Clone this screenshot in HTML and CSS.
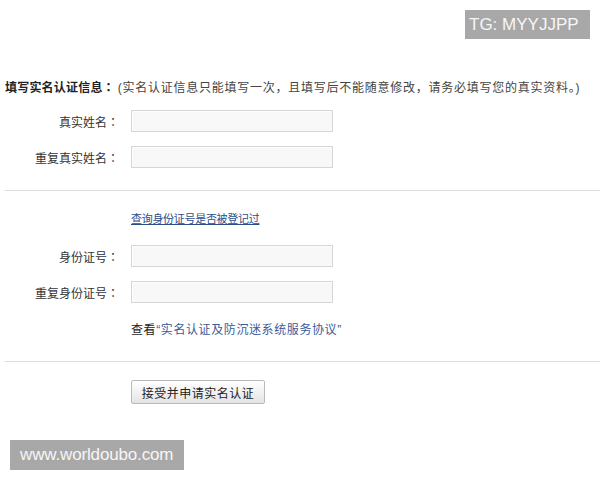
FILE: index.html
```html
<!DOCTYPE html>
<html lang="zh-CN">
<head>
<meta charset="utf-8">
<title>填写实名认证信息</title>
<link rel="stylesheet" href="styles.css">
</head>
<body>
<div class="main">
  <p class="intro"><b class="title">填写实名认证信息<span class="colon" lang="zh-TW">：</span></b><span class="note">(实名认证信息只能填写一次，且填写后不能随意修改，请务必填写您的真实资料。)</span></p>

  <div class="rows">
    <div class="row"><label class="lbl">真实姓名<span class="colon" lang="zh-TW">：</span></label><span class="input"></span></div>
    <div class="row"><label class="lbl">重复真实姓名<span class="colon" lang="zh-TW">：</span></label><span class="input"></span></div>
  </div>

  <hr class="divider">

  <p class="indent link-line"><a class="link" href="#">查询身份证号是否被登记过</a></p>

  <div class="rows">
    <div class="row"><label class="lbl">身份证号<span class="colon" lang="zh-TW">：</span></label><span class="input"></span></div>
    <div class="row"><label class="lbl">重复身份证号<span class="colon" lang="zh-TW">：</span></label><span class="input"></span></div>
  </div>

  <p class="indent agree">查看<span class="proto">“实名认证及防沉迷系统服务协议”</span></p>

  <hr class="divider second">

  <div class="indent"><button class="btn" type="button">接受并申请实名认证</button></div>
</div>

<div class="badge tg">TG: MYYJJPP</div>
<div class="badge site">www.worldoubo.com</div>
</body>
</html>
```

FILE: styles.css
```css
html, body {
  margin: 0;
  padding: 0;
  background: #fff;
}
body {
  width: 600px;
  height: 480px;
  position: relative;
  overflow: hidden;
  font-family: "Liberation Sans", "Noto Sans CJK SC", sans-serif;
  font-size: 12px;
  color: #333;
}
.main {
  padding: 79px 0 0 5px;
}
.colon {
  font-family: "Noto Sans CJK TC", "Noto Sans CJK SC", sans-serif;
}
.intro {
  margin: 0;
  line-height: 16px;
  white-space: nowrap;
  color: #222;
}
.title {
  font-weight: bold;
  letter-spacing: 0.2px;
  margin-right: 3px;
}
.note {
  color: #444;
  letter-spacing: 0.75px;
}
.rows {
  margin-top: 14px;
  display: flex;
  flex-direction: column;
  gap: 14px;
}
.row {
  display: flex;
  align-items: center;
  height: 22px;
}
.lbl {
  width: 114px;
  text-align: right;
  color: #333;
  margin-right: 12px;
}
.input {
  display: block;
  width: 200px;
  height: 20px;
  border: 1px solid #d6d6d6;
  background: #f8f8f8;
  box-shadow: inset 1px 1px 0 #fdfdfd;
}
.divider {
  margin: 22px 0 0 0;
  border: 0;
  height: 1px;
  background: #dcdcdc;
}
.divider.second {
  margin-top: 23px;
}
.indent {
  margin: 0;
  padding-left: 126px;
}
.link-line {
  margin-top: 20px;
  line-height: 16px;
}
.link-line + .rows {
  margin-top: 18px;
}
.link {
  color: #2d4d8a;
  font-size: 11px;
  letter-spacing: -0.3px;
  text-decoration: underline;
}
.agree {
  margin-top: 19px;
  line-height: 16px;
  color: #222;
  letter-spacing: 0.6px;
}
.proto {
  color: #3b5a99;
}
.divider.second + .indent {
  margin-top: 18px;
}
.btn {
  width: 134px;
  height: 24px;
  padding: 0;
  border: 1px solid #b9b9b9;
  border-radius: 2px;
  background: linear-gradient(#ffffff, #e4e4e4);
  font-family: "Liberation Sans", "Noto Sans CJK SC", sans-serif;
  font-size: 12px;
  letter-spacing: 0.5px;
  color: #222;
}
.badge {
  position: absolute;
  background: #a8a8a8;
  color: #f6f6f6;
  font-family: "Liberation Sans", "Noto Sans CJK SC", sans-serif;
  white-space: nowrap;
  box-sizing: border-box;
}
.tg {
  left: 465px;
  top: 10px;
  width: 125px;
  height: 29px;
  line-height: 29px;
  padding-left: 4px;
  font-size: 17px;
}
.site {
  left: 10px;
  top: 440px;
  width: 174px;
  height: 30px;
  line-height: 30px;
  padding-left: 10px;
  font-size: 17px;
  letter-spacing: -0.15px;
}
```
